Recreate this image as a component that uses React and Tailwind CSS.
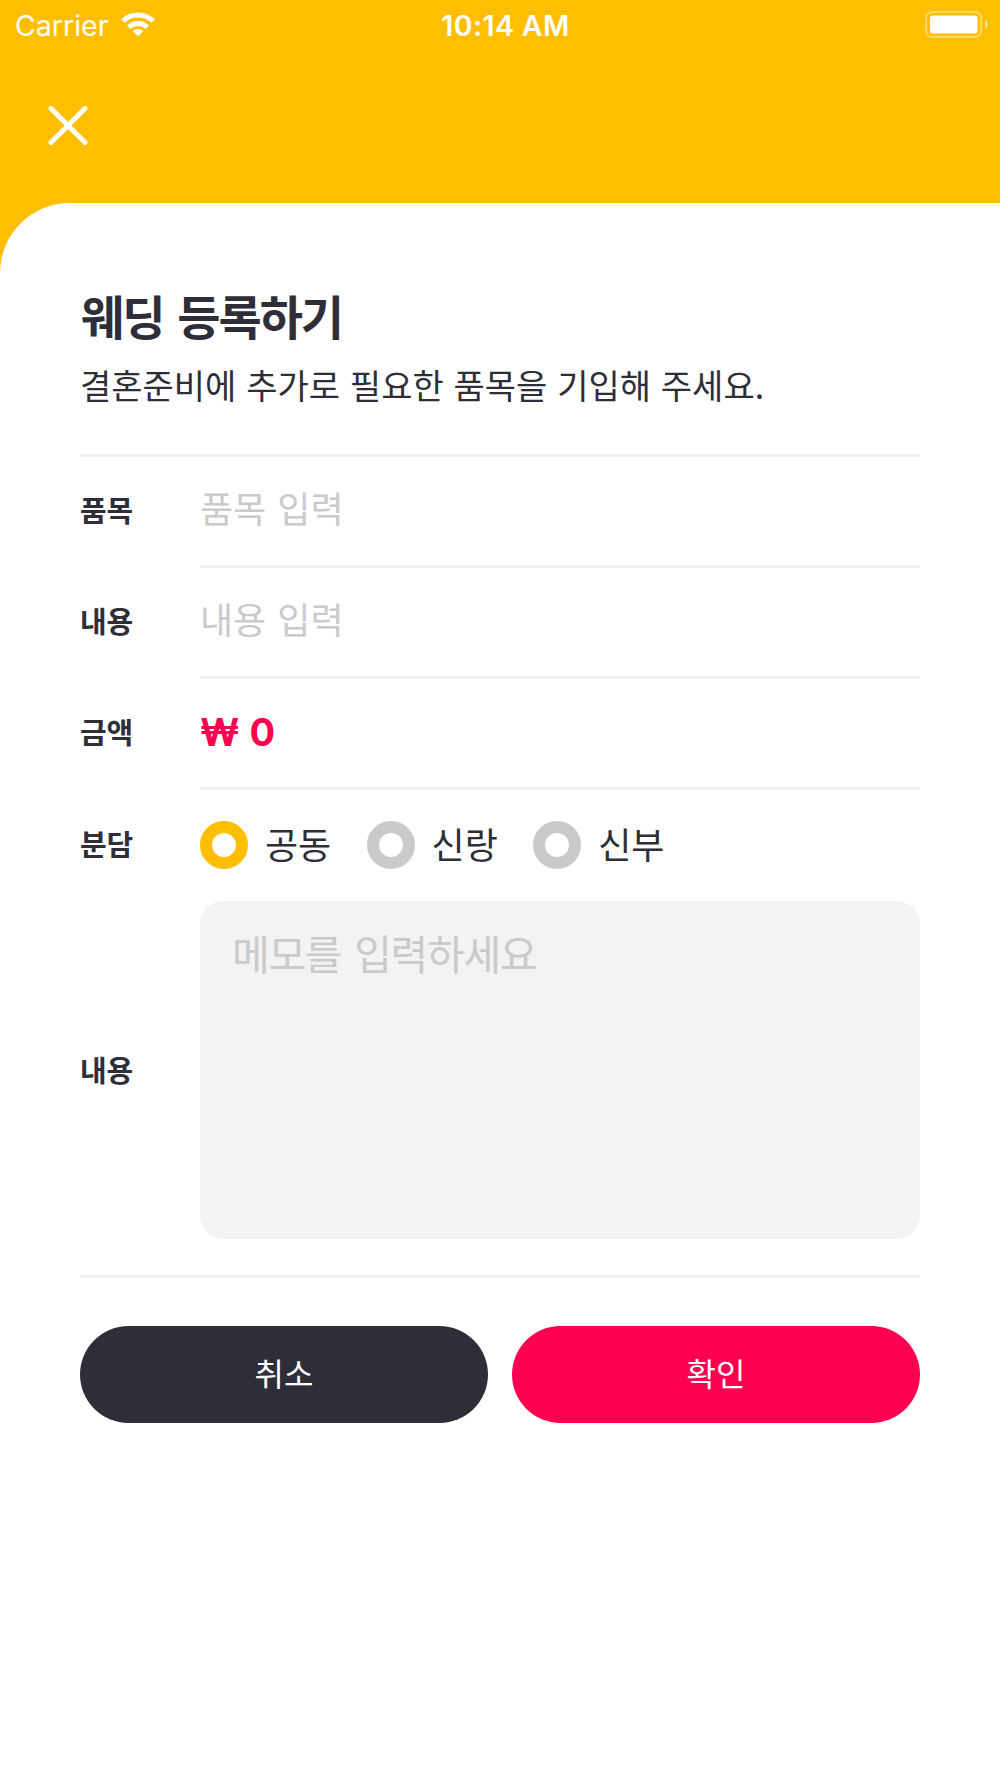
const labelCls = "w-[120px] shrink-0 text-[29px] font-bold leading-none tracking-[-0.3px]";

function Field({ label, children }) {
  return (
    <div className="flex h-[111px] items-stretch">
      <div className={labelCls + " flex items-center pb-[7px]"}>{label}</div>
      <div className="flex flex-1 items-center border-b-[3px] border-[#f0f0f0] pb-[8px] text-[36px] leading-none [word-spacing:3px]">
        {children}
      </div>
    </div>
  );
}

function Radio({ label, selected }) {
  return (
    <div className="flex w-[166.6px] items-center">
      <span className={selected ? "size-12 shrink-0 rounded-full border-[12px] border-[#ffbf00]" : "size-12 shrink-0 rounded-full border-[12px] border-[#cacaca]"} />
      <span className="ml-[17px] pb-[4px] whitespace-nowrap text-[36px] leading-none">{label}</span>
    </div>
  );
}

export default function App() {
  return (
    <div className="h-[1778px] w-[1000px] overflow-hidden bg-[#ffbf00] font-['Noto_Sans_CJK_KR',sans-serif] text-[#2e2e39]">
      <header className="h-[203px] text-white">
        <div className="grid h-[50px] grid-cols-3 items-center font-['Inter','Noto_Sans_CJK_KR',sans-serif] text-[28.5px]">
          <div className="flex items-center pl-[15px]">
            <span className="w-[106px] pt-[3px]">Carrier</span>
            <svg className="mb-[2px]" width="34" height="24" viewBox="0 0 34 24" fill="none" stroke="currentColor" strokeWidth="5">
              <path d="M1.8 9a22 22 0 0 1 30.4 0M7.7 15.2a13.5 13.5 0 0 1 18.6 0" />
              <path d="m17 24.3-5.3-5.2a7.8 7.8 0 0 1 10.6 0Z" fill="currentColor" stroke="none" />
            </svg>
          </div>
          <div className="pt-[3px] pl-[11px] text-center font-semibold whitespace-nowrap tracking-[0.4px]">10:14 AM</div>
          <div className="flex justify-end pr-[12px]">
            <svg className="mb-[2px]" width="63" height="27" viewBox="0 0 63 27"><rect x="1.1" y="1" width="55" height="25" rx="6" fill="none" stroke="white" strokeOpacity=".4" strokeWidth="2" /><rect x="5" y="4.5" width="47.5" height="18" rx="3" fill="white" /><path d="M60 8.5q6 4.8 0 9.6Z" fill="white" fillOpacity=".5" /></svg>
          </div>
        </div>
        <svg className="mt-[56px] ml-[47.5px]" width="40" height="40" viewBox="0 0 40 40" stroke="white" strokeWidth="5" strokeLinecap="round"><path d="m3 2.5 34 34M37 2.5 3 36.5" /></svg>
      </header>
      <main className="h-[1575px] rounded-tl-[70px] bg-white px-20">
        <h1 className="pt-[86px] pl-px text-[47px] leading-[52px] font-bold tracking-[-2px] [word-spacing:5px]">웨딩 등록하기</h1>
        <p className="mt-[17px] text-[34px] leading-[54px] [word-spacing:2.2px]">결혼준비에 추가로 필요한 품목을 기입해 주세요.</p>
        <form className="mt-[42px] border-t-[3px] border-[#f0f0f0]">
          <Field label="품목"><span className="text-[#cacaca]">품목 입력</span></Field>
          <Field label="내용"><span className="text-[#cacaca]">내용 입력</span></Field>
          <Field label="금액"><span className="pt-[6px] font-['Inter','Noto_Sans_CJK_KR',sans-serif] text-[38px] font-bold text-[#ff0050] [word-spacing:1px]">₩ 0</span></Field>
          <div className="flex h-[111px] items-center pb-[2px]">
            <div className={labelCls + " pb-[3px]"}>분담</div>
            <Radio label="공동" selected /><Radio label="신랑" /><Radio label="신부" />
          </div>
          <div className="flex items-center">
            <div className={labelCls + " pb-[2px]"}>내용</div>
            <div className="h-[338px] flex-1 rounded-[24px] bg-[#f3f3f3] px-8 pt-[25px] text-[41px] leading-[52px] tracking-[-1.3px] text-[#cacaca] [word-spacing:5px]">메모를 입력하세요</div>
          </div>
          <div className="mt-[36px] grid grid-cols-2 gap-6 border-t-[3px] border-[#f0f0f0] pt-[48px] text-[32px] text-white">
            <button type="button" className="h-[97px] rounded-full bg-[#2e2e39] pb-[5px]">취소</button>
            <button type="button" className="h-[97px] rounded-full bg-[#ff0050] pb-[5px]">확인</button>
          </div>
        </form>
      </main>
    </div>
  );
}
